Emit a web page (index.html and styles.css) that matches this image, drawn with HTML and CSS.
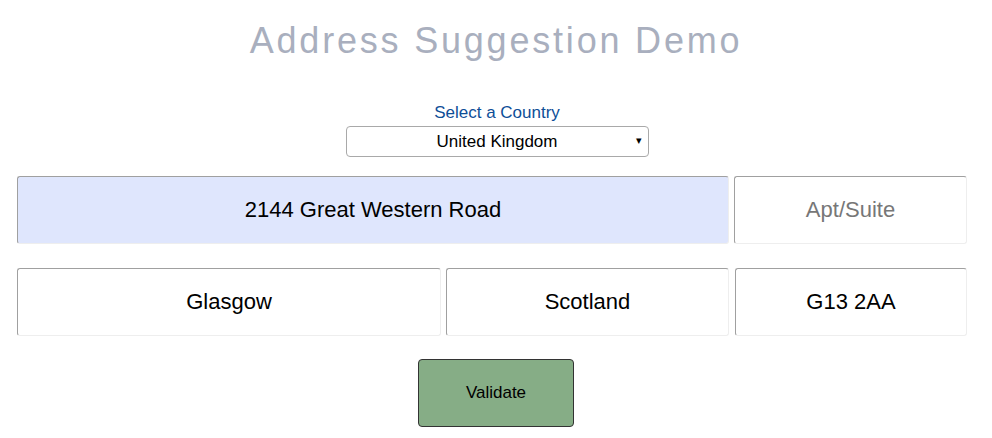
FILE: index.html
```html
<!DOCTYPE html>
<html lang="en">
<head>
<meta charset="UTF-8">
<title>Address Suggestion Demo</title>
<link rel="stylesheet" href="styles.css">
</head>
<body>
<h1 class="title">Address Suggestion Demo</h1>

<!-- Country picker -->
<div class="country-picker">
    <label for="country">Select a Country</label>
    <div class="select-box">
        <span id="country">United Kingdom</span>
        <span class="arrow">&#9662;</span>
    </div>
</div>

<!-- Address fields -->
<div class="address-form">
    <div class="row row-street">
        <input type="text" class="field field-active" value="2144 Great Western Road">
        <input type="text" class="field" placeholder="Apt/Suite">
    </div>
    <div class="row row-city">
        <input type="text" class="field" value="Glasgow">
        <input type="text" class="field" value="Scotland">
        <input type="text" class="field field-zip" value="G13 2AA">
    </div>
</div>

<div class="actions">
    <button class="validate-btn">Validate</button>
</div>
</body>
</html>
```

FILE: styles.css
```css
body {
    font-family: 'Liberation Sans', Arial, sans-serif;
    margin: 0;
    padding: 0;
    background-color: #ffffff;
    color: #000000;
}

.title {
    margin: 0;
    padding-top: 20px;
    text-align: center;
    font-size: 36px;
    font-weight: normal;
    letter-spacing: 2.8px;
    color: #a9afbe;
    line-height: 42px;
}

.country-picker {
    display: flex;
    flex-direction: column;
    align-items: center;
    margin-top: 41px;
    margin-left: 2px;
}

.country-picker label {
    color: #0e4e97;
    font-size: 17px;
    line-height: 19px;
    margin-bottom: 4px;
}

.select-box {
    position: relative;
    width: 301px;
    height: 29px;
    border: 1px solid #a9a9a9;
    border-radius: 4px;
    display: flex;
    align-items: center;
    justify-content: center;
    font-size: 17px;
}

.select-box .arrow {
    position: absolute;
    right: 6px;
    top: 7px;
    font-size: 11px;
}

.address-form {
    width: 951px;
    margin: 19px 0 0 17px;
    display: flex;
    flex-direction: column;
    gap: 24px;
}

.row {
    display: grid;
    column-gap: 5px;
}

.row-street {
    grid-template-columns: 712px 233px;
}

.row-city {
    grid-template-columns: 424px 283px 233px;
}

.field {
    box-sizing: border-box;
    height: 68px;
    width: 100%;
    margin: 0;
    padding: 0 8px;
    border: 1px solid #eeeeee;
    border-top-color: #a0a0a0;
    border-left-color: #a0a0a0;
    border-radius: 3px;
    background-color: #ffffff;
    font-family: 'Liberation Sans', Arial, sans-serif;
    font-size: 22px;
    text-align: center;
    color: #000000;
}

.field::placeholder {
    color: #777777;
}

.field-active {
    background-color: #dfe6fd;
}

.field-zip {
    margin-left: 1px;
    width: 232px;
}

.actions {
    display: flex;
    justify-content: center;
    margin-top: 23px;
}

.validate-btn {
    width: 156px;
    height: 68px;
    border: 1px solid #333333;
    border-radius: 4px;
    background-color: #86ad86;
    font-family: 'Liberation Sans', Arial, sans-serif;
    font-size: 17px;
    color: #000000;
}
```
